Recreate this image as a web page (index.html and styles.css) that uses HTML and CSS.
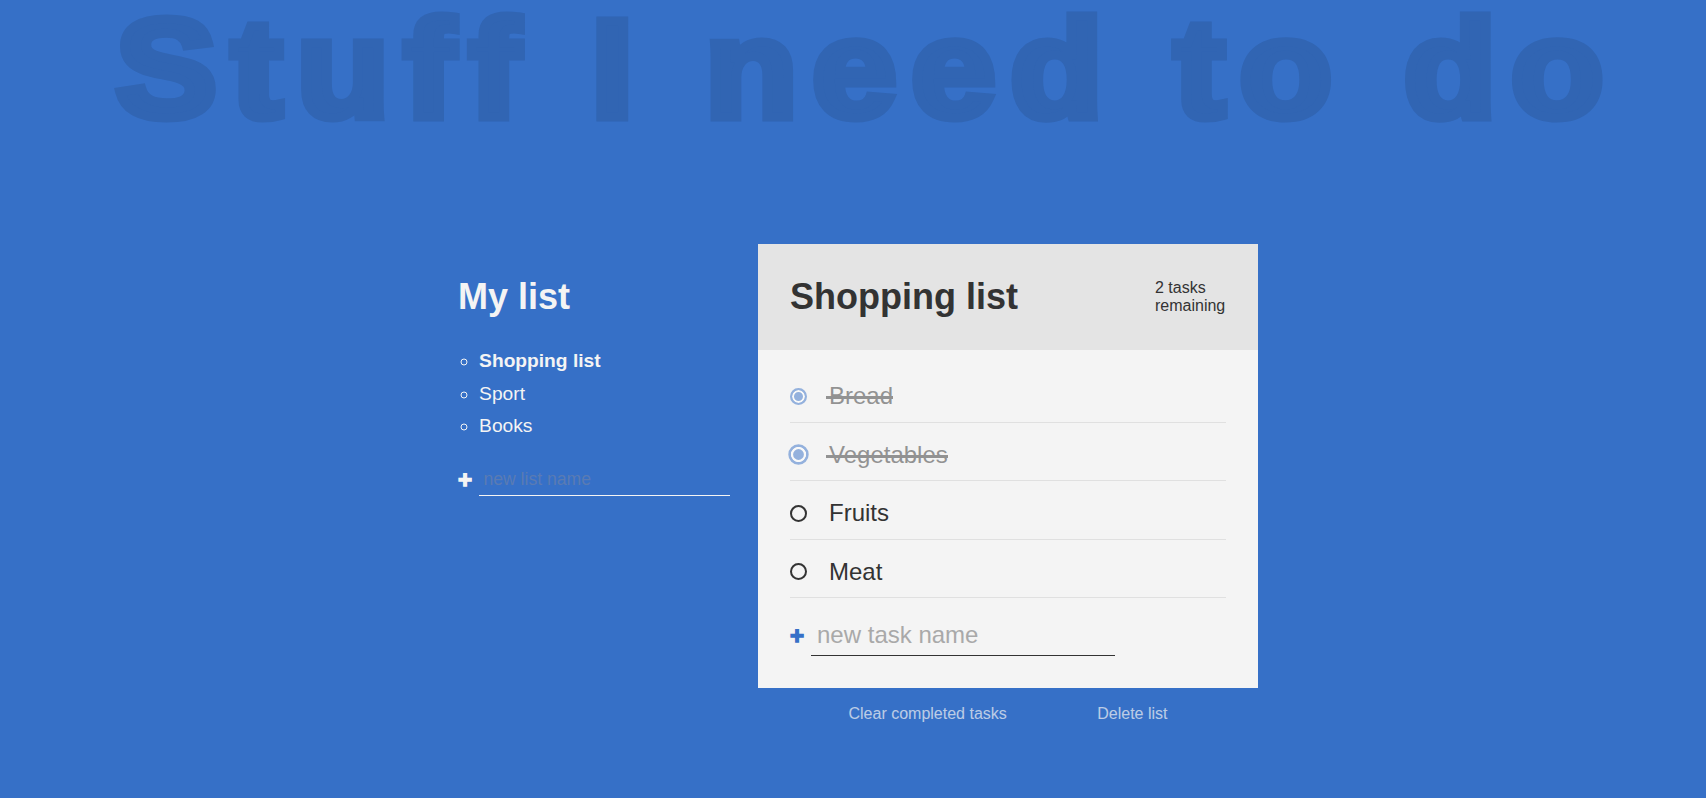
FILE: index.html
```html
<!DOCTYPE html>
<html lang="en">
<head>
<meta charset="UTF-8">
<title>Stuff I need to do</title>
<link rel="stylesheet" href="styles.css">
</head>
<body>
<h1 class="title">Stuff I need to do</h1>

<div class="all-tasks">
  <h2 class="task-list-title">My list</h2>
  <ul class="task-list">
    <li class="list-name active-list">Shopping list</li>
    <li class="list-name">Sport</li>
    <li class="list-name">Books</li>
  </ul>
  <form class="new-form">
    <button type="button" class="btn create" aria-label="create new list">+</button>
    <input type="text" class="new list" placeholder="new list name" aria-label="new list name">
  </form>
</div>

<div class="todo-list">
  <div class="todo-header">
    <h2 class="list-title">Shopping list</h2>
    <p class="task-count">2 tasks remaining</p>
  </div>
  <div class="todo-body">
    <div class="tasks">
      <div class="task">
        <input type="checkbox" class="task-check" id="task-1" checked>
        <label for="task-1"><span class="custom-checkbox"></span>Bread</label>
      </div>
      <div class="task hovered">
        <input type="checkbox" class="task-check" id="task-2" checked>
        <label for="task-2"><span class="custom-checkbox"></span>Vegetables</label>
      </div>
      <div class="task">
        <input type="checkbox" class="task-check" id="task-3">
        <label for="task-3"><span class="custom-checkbox"></span>Fruits</label>
      </div>
      <div class="task">
        <input type="checkbox" class="task-check" id="task-4">
        <label for="task-4"><span class="custom-checkbox"></span>Meat</label>
      </div>
    </div>
    <div class="new-task-creator">
      <form class="new-form">
        <button type="button" class="btn create" aria-label="create new task">+</button>
        <input type="text" class="new task-input" placeholder="new task name" aria-label="new task name">
      </form>
    </div>
    <div class="delete-stuff">
      <button type="button" class="btn delete">Clear completed tasks</button>
      <button type="button" class="btn delete">Delete list</button>
    </div>
  </div>
</div>
</body>
</html>
```

FILE: styles.css
```css
*, *::before, *::after {
  box-sizing: border-box;
}

body {
  margin: 0;
  padding-left: 10px;
  min-height: 100vh;
  background: rgb(54, 112, 199);
  color: #f4f4f4;
  font-family: "Liberation Sans", Arial, sans-serif;
  font-size: 24px;
  display: grid;
  grid-template-columns: 1fr 300px 500px 1fr;
  grid-template-rows: auto 1fr;
  grid-template-areas:
    "header header header header"
    ". lists active .";
}

.title {
  grid-area: header;
  margin: 0 0 93.3px;
  padding-left: 18px;
  text-align: center;
  white-space: nowrap;
  font-size: 151.4px;
  line-height: 150.7px;
  font-weight: 700;
  letter-spacing: 14.8px;
  color: rgb(49, 101, 179);
  -webkit-text-stroke: 10px rgb(49, 101, 179);
  transform-origin: 50% 0;
  transform: scaleY(0.92);
}

.all-tasks {
  grid-area: lists;
  align-self: start;
}

.task-list-title {
  margin: 32px 0 27px;
  font-size: 36px;
  line-height: normal;
}

.task-list {
  margin: 0;
  padding-left: 21.12px;
  font-size: 19.2px;
  line-height: 1.7;
  list-style: circle;
}

.active-list {
  font-weight: 700;
}

.new-form {
  display: flex;
}

.all-tasks .new-form {
  margin-top: 22px;
}

.btn {
  background: none;
  border: 0;
  padding: 0;
  color: inherit;
  font-family: inherit;
  cursor: pointer;
}

.btn.create {
  margin-right: 7px;
  font-size: 24px;
  font-weight: 700;
  line-height: normal;
  -webkit-text-stroke: 1.4px currentColor;
}

.new {
  background: transparent;
  border: 0;
  border-bottom: 1px solid currentColor;
  color: inherit;
  font: inherit;
  line-height: normal;
  padding: 0.25em;
  outline: none;
}

.new.list {
  width: 251px;
  font-size: 17.6px;
}

.new.list::placeholder {
  color: #5a7bb3;
  opacity: 1;
}

.new.task-input {
  width: 304px;
}

.new.task-input::placeholder {
  color: #a9a9a9;
  opacity: 1;
}

.todo-list {
  grid-area: active;
  align-self: start;
  background: #f4f4f4;
  color: #333;
}

.todo-header {
  display: flex;
  align-items: center;
  justify-content: space-between;
  padding: 32px;
  background: #e4e4e4;
}

.list-title {
  margin: 0 36px 0 0;
  font-size: 36px;
  line-height: normal;
}

.task-count {
  width: 71px;
  margin: 0;
  font-size: 16px;
}

.todo-body {
  position: relative;
  padding: 32px;
}

.task {
  position: relative;
  margin-bottom: 30px;
}

.task::after {
  content: "";
  position: absolute;
  left: 0;
  right: 0;
  bottom: -12px;
  height: 1px;
  background: currentColor;
  opacity: 0.1;
}

.task-check {
  position: absolute;
  opacity: 0;
}

.task label {
  position: relative;
  display: inline-flex;
  align-items: center;
  cursor: pointer;
}

.custom-checkbox {
  flex-shrink: 0;
  width: 17px;
  height: 17px;
  margin-right: 22px;
  border: 2px solid currentColor;
  border-radius: 50%;
}

.task.hovered .custom-checkbox {
  transform: scale(1.2);
}

.task label::after {
  content: "";
  position: absolute;
  left: 36px;
  right: 0;
  top: 50%;
  height: 3px;
  background: currentColor;
  transform: scaleX(0);
  transform-origin: left;
}

.task-check:checked + label {
  opacity: 0.5;
}

.task-check:checked + label::after {
  transform: scaleX(1);
}

.task-check:checked + label .custom-checkbox {
  background: rgb(54, 112, 199);
  border-color: rgb(54, 112, 199);
  box-shadow: inset 0 0 0 2px #fff;
}

.new-task-creator {
  margin-top: -1px;
}

.new-task-creator .create {
  color: rgb(54, 112, 199);
}

.delete-stuff {
  position: absolute;
  left: 0;
  bottom: -35px;
  width: 100%;
  display: flex;
  justify-content: space-evenly;
  color: #f4f4f4;
}

.btn.delete {
  font-size: 16px;
  line-height: normal;
  opacity: 0.7;
}
```
